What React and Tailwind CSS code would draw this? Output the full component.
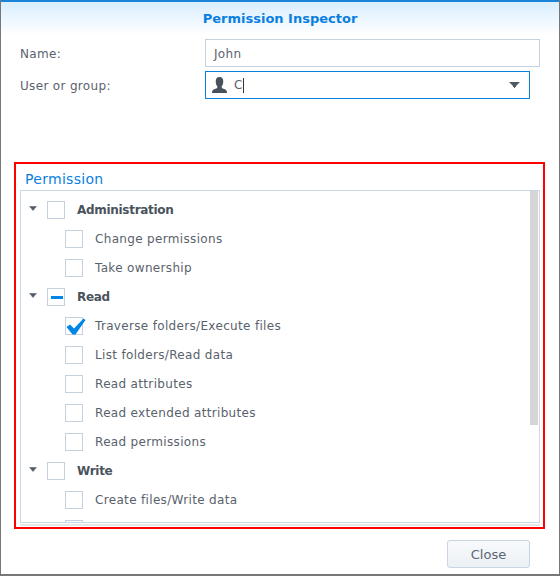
function Box({ state }) {
  return (
    <span className="relative block w-[18px] h-[18px] border border-[#c5d1de] bg-white shrink-0">
      {state === "mixed" && <span className="absolute left-[3px] top-[7px] w-[12px] h-[3px] bg-[#0086e5]" />}
      {state === "checked" && (
        <svg className="absolute left-0 top-0 overflow-visible" width="20" height="17" viewBox="0 0 20 17">
          <path d="M0.500 9L4 6.500L8 10.500L17.500 0.500L19.500 2L9.500 16.500L6.500 16.500Z" fill="#0086e5" />
        </svg>
      )}
    </span>
  );
}
function Group({ label, state }) {
  return (
    <div className="flex items-center h-[29px]">
      <svg className="ml-[8px] mr-[10px] mt-[-3px]" width="8" height="5" viewBox="0 0 9 5"><path d="M0 0H9L6 3V4H5V5H4V4H3V3Z" fill="#505a64" /></svg>
      <Box state={state} />
      <span className="ml-[12px] font-bold text-[#4a535c] tracking-[-0.3px]">{label}</span>
    </div>
  );
}
function Item({ label, state }) {
  return (
    <div className="flex items-center h-[29px] pl-[44px]">
      <Box state={state} />
      {label && <span className="ml-[12px] text-[#59626c]">{label}</span>}
    </div>
  );
}
export default function App() {
  return (
    <div className="relative w-[560px] h-[576px] overflow-hidden bg-white border-l-[1px] border-r-[1px] border-b-[2px] border-[#777] text-[12px] tracking-[0.33px] font-['DejaVu_Sans',sans-serif]">
      <div className="h-[2px] bg-[#1a84d8] -mx-[1px]" />
      <div className="h-[33px] flex items-center justify-center bg-gradient-to-b from-[#d9eeff] to-white text-[13px] font-bold text-[#0a7fe0] tracking-normal">
        Permission Inspector
      </div>
      <div className="pl-[19px] pr-[19px] text-[#59626c]">
        <div className="flex items-center h-[28px] mt-[4px]">
          <span className="w-[185px] pt-[2px]">Name:</span>
          <div className="flex items-center w-[335px] h-[28px] border border-[#c5d1de] pl-[8px] pt-[1px]">John</div>
        </div>
        <div className="flex items-center h-[28px] mt-[4px]">
          <span className="w-[185px] pt-[2px]">User or group:</span>
          <div className="flex items-center w-[325px] h-[28px] border border-[#0a82dc] pl-[5px] pr-[9px]">
            <svg width="17" height="16" viewBox="0 0 18 17"><path d="M9 0C6 0 5 2 5 5c0 2.500 1 4 1.800 5 0 1-.3 2-2 2.500C2.500 13.200 1 14 1 17h16c0-3-1.500-3.800-3.800-4.500-1.700-.5-2-1.500-2-2.500C12 9 13 7.500 13 5c0-3-1-5-4-5z" fill="#47525d" /></svg>
            <span className="ml-[6px] flex-1 flex items-center">C<span className="w-px h-[15px] bg-[#333]" /></span>
            <svg width="11" height="6" viewBox="0 0 11 6"><path d="M0 0H11L7 4V5H6V6H5V5H4V4Z" fill="#505a64" /></svg>
          </div>
        </div>
        <div className="mt-[67px] h-[24px] text-[14px] leading-[24px] text-[#0a7fe0] pl-[5px] pt-[1px] tracking-[0.3px]">Permission</div>
        <div className="relative h-[333px] w-[520px] border border-[#c9d7e6] overflow-hidden">
          <div className="pt-[4px]">
            <Group label="Administration" />
            <Item label="Change permissions" />
            <Item label="Take ownership" />
            <Group label="Read" state="mixed" />
            <Item label="Traverse folders/Execute files" state="checked" />
            <Item label="List folders/Read data" />
            <Item label="Read attributes" />
            <Item label="Read extended attributes" />
            <Item label="Read permissions" />
            <Group label="Write" />
            <Item label="Create files/Write data" />
            <Item />
          </div>
          <div className="absolute right-[1px] top-0 w-[8px] h-[234px] bg-[#d5d5d5]" />
        </div>
        <div className="h-[2px] w-[520px] mt-[1px] bg-[#e6e6e6]" />
        <div className="flex justify-end mt-[14px] pr-[10px]">
          <button className="w-[83px] h-[28px] rounded-[3px] border border-[#c9d5e2] bg-gradient-to-b from-[#f8fafc] to-[#ebf0f5] text-[13px] tracking-normal text-[#5a6673] pt-[1px]">Close</button>
        </div>
      </div>
      <div className="absolute left-[13px] top-[162px] w-[531px] h-[367px] border-2 border-[#ff0000] pointer-events-none" />
    </div>
  );
}
